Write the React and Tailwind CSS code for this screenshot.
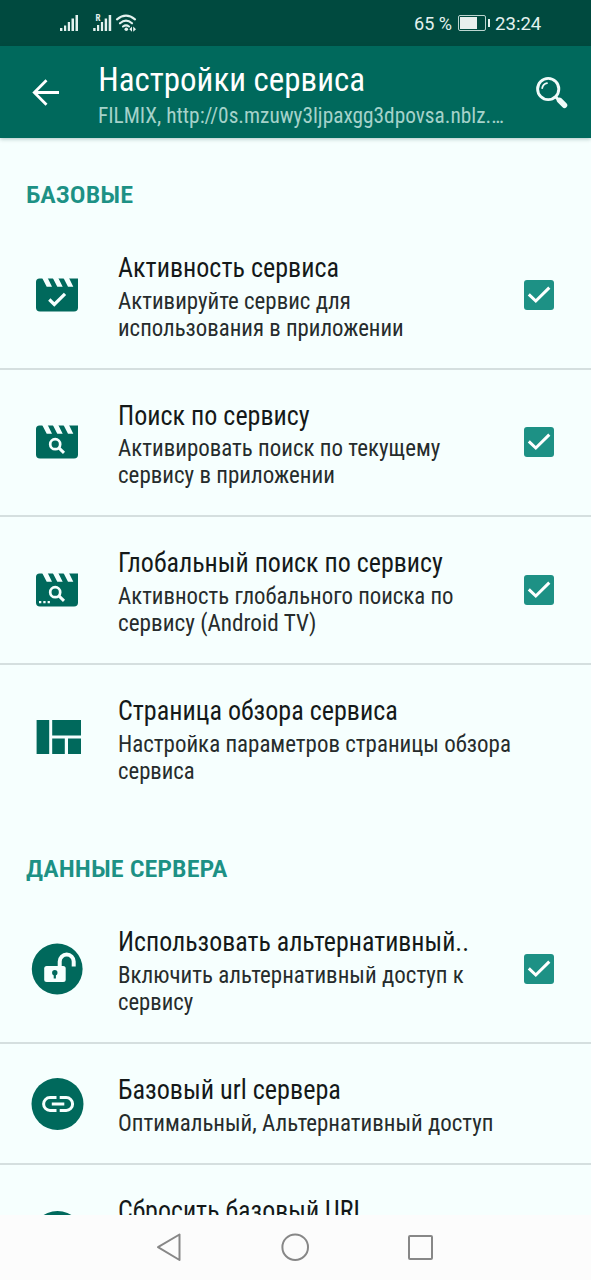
import { useLayoutEffect, useRef, useState } from "react";

// One line of text condensed horizontally to a given width.
function Line({ w, className = "", children }) {
  const ref = useRef(null);
  const [scale, setScale] = useState(1);
  useLayoutEffect(() => {
    setScale(w / ref.current.offsetWidth);
  }, [w]);
  return (
    <span className={`flex items-center overflow-visible whitespace-nowrap ${className}`}>
      <span ref={ref} className="block shrink-0 origin-left" style={{ transform: `scaleX(${scale})` }}>
        {children}
      </span>
    </span>
  );
}

function Clapper({ children }) {
  return (
    <svg className="h-[34px] w-[42px]" viewBox="0 0 42 34" fill="none">
      <path d="M3.5 .5H42V29.5Q42 33.5 38 33.5H4Q0 33.5 0 29.5V4Q0 .5 3.5 .5Z" fill="#00695c" />
      <path
        d="M6.2 0H11.7L16 8.8H10.7ZM16.8 0H22.3L26.7 8.8H21.3ZM27.5 0H33L37.3 8.8H32Z"
        fill="#f6fffe"
      />
      {children}
    </svg>
  );
}

function Loupe() {
  return (
    <g stroke="#f6fffe">
      <circle cx="19.2" cy="19.2" r="5" strokeWidth="2.7" />
      <path d="M22.6 22.6L28 27.8" strokeWidth="3" />
    </g>
  );
}

const icons = {
  check: (
    <Clapper>
      <path d="M13.3 21.5L18.3 26.5L29 15.8" stroke="#f6fffe" strokeWidth="3.2" />
    </Clapper>
  ),
  search: (
    <Clapper>
      <Loupe />
    </Clapper>
  ),
  global: (
    <Clapper>
      <Loupe />
      <path d="M3 28h2.3v2.3H3zM7.3 28h2.3v2.3H7.3zM11.6 28h2.3v2.3h-2.3z" fill="#f6fffe" />
    </Clapper>
  ),
  quilt: (
    <svg className="-mt-[2px] h-[34px] w-[45px]" viewBox="0 0 45 34" fill="#00695c">
      <path d="M.6 0h12.6v34H.6zM16.2 0H45v15.5H16.2zM16.2 18.5h12.6V34H16.2zM32 18.5h13V34H32z" />
    </svg>
  ),
  lock: (
    <svg className="h-[52px] w-[52px]" viewBox="0 0 52 52" fill="none">
      <circle cx="26.2" cy="26" r="25.4" fill="#00695c" />
      <rect x="13.2" y="23" width="21.5" height="16" rx="2.5" fill="#f6fffe" />
      <path d="M28.7 24V18.6a7 7 0 0 1 14 0V23.5" stroke="#f6fffe" strokeWidth="4" />
      <circle cx="23.8" cy="29.8" r="2.7" fill="#00695c" />
      <path d="M22.7 31h2.2v4.5h-2.2z" fill="#00695c" />
    </svg>
  ),
  link: (
    <svg className="mt-px h-[52px] w-[53px]" viewBox="0 0 53 52" fill="none">
      <circle cx="26.5" cy="26" r="26" fill="#00695c" />
      <path d="M25.5 19.6H19a6.4 6.4 0 0 0 0 12.8h6.5M28.7 19.6h6.5a6.4 6.4 0 0 1 0 12.8h-6.5M20.8 26h12.5" stroke="#f6fffe" strokeWidth="3" />
    </svg>
  ),
  reset: (
    <svg className="h-[52px] w-[53px]" viewBox="0 0 53 52">
      <circle cx="26.5" cy="26" r="26" fill="#00695c" />
    </svg>
  ),
};

function Row({ icon, title, lines, checked, height = "h-[147.6px]", border = true, iconPad = "pl-9" }) {
  return (
    <div className={`flex shrink-0 items-center ${height} ${border ? "border-b-2 border-[#d5dfdf]" : "border-b-2 border-transparent"}`}>
      <div className={`w-[118px] shrink-0 ${iconPad}`}>{icons[icon]}</div>
      <div className="min-w-0 flex-1 pt-[5px]">
        <Line w={title[1]} className="mb-[2px] -mt-[2px] h-[35px] text-[27px] text-[#141919]">{title[0]}</Line>
        {lines.map(([text, w]) => (
          <Line key={text} w={w} className="h-[27px] text-[23.3px] text-[#262c2c]">{text}</Line>
        ))}
        {lines.length === 0 && <div className="h-[54px]" />}
      </div>
      {checked && (
        <div className="mr-[37.5px] flex size-[30px] shrink-0 items-center justify-center rounded-[3px] bg-[#1d9185]">
          <svg className="size-[30px]" viewBox="0 0 30 30" fill="none">
            <path d="M4.8 14.3L11.8 21L25.3 7.6" stroke="#fff" strokeWidth="3" />
          </svg>
        </div>
      )}
    </div>
  );
}

function Section({ w, height, children }) {
  return (
    <div className={`flex shrink-0 items-center pl-[26px] pt-[32px] ${height}`}>
      <Line w={w} className="text-[23px] font-semibold text-[#1d9185]">{children}</Line>
    </div>
  );
}

export default function App() {
  return (
    <div className="flex h-[1280px] w-[591px] flex-col overflow-hidden bg-[#f6fffe] font-['Roboto_Condensed','Roboto',sans-serif]">
      <div className="flex h-[46px] shrink-0 items-center bg-[#004a3f] text-[#e4f2ef]">
        <svg className="ml-[59px] h-[20px] w-[80px]" viewBox="0 0 80 20" fill="#e4f2ef">
          <path d="M1 15h2.4v3H1zM5 12.5h2.2v5.5H5zM8.8 9H11v9H8.8zM12.5 5.5h2.5v12.5h-2.5zM16.5 2H19v16h-2.5z" />
          <path d="M34.2 15h2.4v3h-2.4zM38 12h2.2v6H38zM41.9 9h2.2v9h-2.2zM45.7 5.5h2.4v12.5h-2.4zM49.7 2h2.5v16h-2.5z" />
          <text x="36.5" y="8" fontSize="8.5" fontWeight="700" textLength="5" lengthAdjust="spacingAndGlyphs">R</text>
          <g fill="none" stroke="#e4f2ef" strokeWidth="2.1" strokeLinecap="round">
            <path d="M58 6.4Q67 -1 76 6.4M61 10.3Q67 5 73 10.3M64 13.5Q67 11.2 70 13.5" />
          </g>
          <circle cx="67.3" cy="16.3" r="1.8" />
          <path d="M73 13.6v5.2l-2.7-2.6zM74.2 13.6v5.2l2.8-2.6z" />
        </svg>
        <div className="flex-1" />
        <Line w={38} className="mr-[5px] mt-[3px] w-[39px] font-['Roboto'] text-[19px]">65 %</Line>
        <div className="flex h-[15.5px] w-[28px] items-center rounded-[2px] border border-[#bcd5d0] p-px">
          <div className="h-[11.5px] w-[17px] bg-[#e8efed]" />
        </div>
        <div className="ml-[1.5px] mr-[5px] h-[8px] w-[2px] bg-[#e4f2ef]" />
        <Line w={46} className="mr-[50.5px] mt-[2px] w-[46px] font-['Roboto'] text-[19px]">23:24</Line>
      </div>
      <div className="z-10 flex h-[92px] shrink-0 items-center bg-[#00695c] shadow-[0_1px_4px_rgba(0,60,55,0.3)]">
        <svg className="ml-[32px] h-[28px] w-[28px] shrink-0" viewBox="0 0 28 28" fill="none">
          <path d="M27 14.5H3M14.5 2.3L2.3 14.5L14.5 26.7" stroke="#fff" strokeWidth="2.8" />
        </svg>
        <div className="ml-[38.2px] flex-1 pt-[10px]">
          <Line w={267} className="h-[38px] text-[33px] text-white">Настройки сервиса</Line>
          <Line w={406} className="h-[35px] text-[22.8px] text-[#a5d2ca]">FILMIX, http://0s.mzuwy3ljpaxgg3dpovsa.nblz.…</Line>
        </div>
        <svg className="mr-[23px] h-[34px] w-[33px] shrink-0" viewBox="0 0 33 34" fill="none" stroke="#f0fbf9" strokeLinecap="round">
          <circle cx="13.2" cy="14" r="10.6" strokeWidth="2.9" />
          <path d="M7.2 13.2Q7.8 9.2 12 8.2" strokeWidth="1.8" />
          <path d="M21 22.3L23.5 24.8" strokeWidth="3" />
          <path d="M24.5 25.3L29.5 30.3" strokeWidth="5.5" />
        </svg>
      </div>
      <div className="flex min-h-0 flex-1 flex-col overflow-hidden">
        <Section w={107} height="h-[84px]">БАЗОВЫЕ</Section>
        <Row icon="check" title={["Активность сервиса", 221]} lines={[["Активируйте сервис для", 233], ["использования в приложении", 286]]} checked />
        <Row icon="search" title={["Поиск по сервису", 192]} lines={[["Активировать поиск по текущему", 322], ["сервису в приложении", 217]]} checked />
        <Row icon="global" title={["Глобальный поиск по сервису", 325]} lines={[["Активность глобального поиска по", 336], ["сервису (Android TV)", 198]]} checked />
        <Row icon="quilt" title={["Страница обзора сервиса", 280]} lines={[["Настройка параметров страницы обзора", 393], ["сервиса", 77]]} border={false} />
        <Section w={202} height="h-[84px]">ДАННЫЕ СЕРВЕРА</Section>
        <Row icon="lock" title={["Использовать альтернативный..", 351]} lines={[["Включить альтернативный доступ к", 346], ["сервису", 75]]} checked iconPad="pl-[31px]" />
        <Row icon="link" title={["Базовый url сервера", 223]} lines={[["Оптимальный, Альтернативный доступ", 375]]} height="h-[120.6px]" iconPad="pl-[31px]" />
        <Row icon="reset" title={["Сбросить базовый URL", 248]} lines={[]} iconPad="pl-[31px]" />
      </div>
      <div className="z-10 flex h-[65px] shrink-0 items-center bg-[#fcfcfc]">
        <svg className="-mt-px ml-[156px] h-[30px] w-[265px]" viewBox="0 0 265 30" fill="none" stroke="#878787" strokeWidth="2" strokeLinejoin="round">
          <path d="M23.5 2.5V28L2 15.2Z" />
          <ellipse cx="139.2" cy="15.2" rx="12.8" ry="12.8" />
        </svg>
        <div className="-ml-[13px] h-[25px] w-[25px] rounded-[2px] border-2 border-[#878787]" />
      </div>
    </div>
  );
}
